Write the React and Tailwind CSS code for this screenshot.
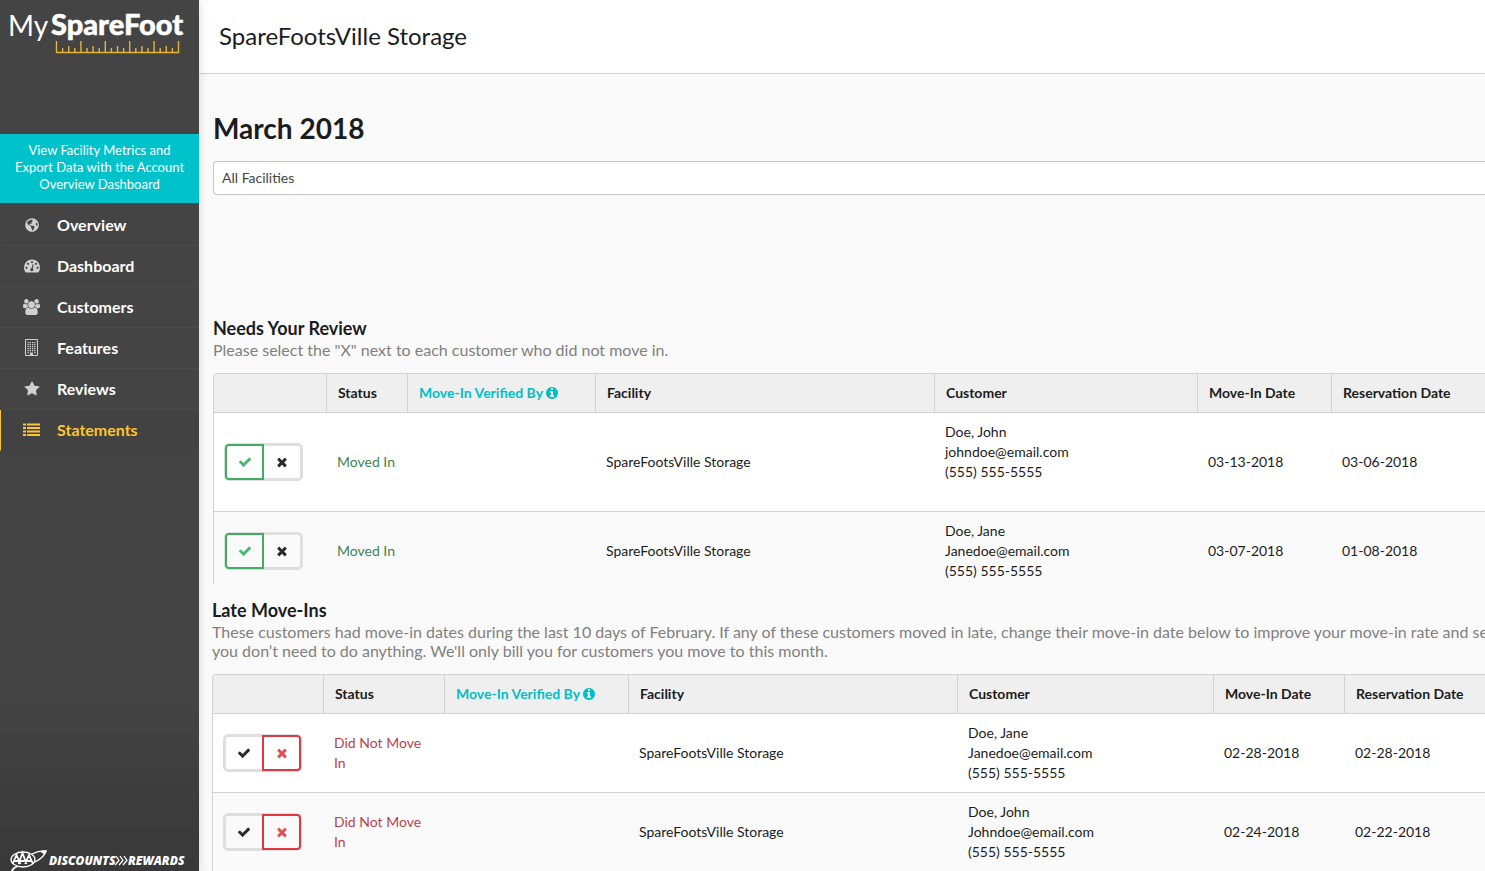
// monthly statement page: sidebar, facility filter and move-in review tables
import React, { useState } from 'react';
import { FaGlobeAmericas } from 'react-icons/fa';

const CHECK = 'M1671 566q0 40-28 68l-724 724-136 136q-28 28-68 28t-68-28l-136-136-362-362q-28-28-28-68t28-68l136-136q28-28 68-28t68 28l294 295 656-657q28-28 68-28t68 28l136 136q28 28 28 68z';
const CROSS = 'M1490 1322q0 40-28 68l-136 136q-28 28-68 28t-68-28l-294-294-294 294q-28 28-68 28t-68-28l-136-136q-28-28-28-68t28-68l294-294-294-294q-28-28-28-68t28-68l136-136q28-28 68-28t68 28l294 294 294-294q28-28 68-28t68 28l136 136q28 28 28 68t-28 68l-294 294 294 294q28 28 28 68z';
const INFO = 'M1152 1376v-160q0-14-9-23t-23-9h-96v-512q0-14-9-23t-23-9h-320q-14 0-23 9t-9 23v160q0 14 9 23t23 9h96v320h-96q-14 0-23 9t-9 23v160q0 14 9 23t23 9h448q14 0 23-9t9-23zm-128-896v-160q0-14-9-23t-23-9h-192q-14 0-23 9t-9 23v160q0 14 9 23t23 9h192q14 0 23-9t9-23zm640 416q0 209-103 385.5t-279.5 279.5-385.5 103-385.5-103-279.5-279.5-103-385.5 103-385.5 279.5-279.5 385.5-103 385.5 103 279.5 279.5 103 385.5z';
const STAR = 'M1728 647q0 22-26 48l-363 354 86 500q1 7 1 20 0 21-10.5 35.5t-30.5 14.5q-19 0-40-12l-449-236-449 236q-22 12-40 12-21 0-31.5-14.5t-10.5-35.5q0-6 2-20l86-500-364-354q-25-27-25-48 0-37 56-46l502-73 225-455q19-41 49-41t49 41l225 455 502 73q56 9 56 46z';
const USERS = 'M529 896q-162 5-265 128h-134q-82 0-138-40.5t-56-118.5q0-353 124-353 6 0 43.5 21t97.5 42.5 119 21.5q67 0 133-23-5 37-5 66 0 139 81 256zm1071 637q0 120-73 189.5t-194 69.5h-874q-121 0-194-69.5t-73-189.5q0-53 3.5-103.5t14-109 26.5-108.5 43-97.5 62-81 85.5-53.5 111.5-20q10 0 43 21.5t73 48 107 48 135 21.5 135-21.5 107-48 73-48 43-21.5q61 0 111.5 20t85.5 53.5 62 81 43 97.5 26.5 108.5 14 109 3.5 103.5zm-1024-1277q0 106-75 181t-181 75-181-75-75-181 75-181 181-75 181 75 75 181zm704 384q0 159-112.5 271.5t-271.5 112.5-271.5-112.5-112.5-271.5 112.5-271.5 271.5-112.5 271.5 112.5 112.5 271.5zm576 225q0 78-56 118.5t-138 40.5h-134q-103-123-265-128 81-117 81-256 0-29-5-66 66 23 133 23 59 0 119-21.5t97.5-42.5 43.5-21q124 0 124 353zm-128-609q0 106-75 181t-181 75-181-75-75-181 75-181 181-75 181 75 75 181z';

const Glyph = ({ d, className, viewBox = '0 0 1792 1792' }) => (
    <svg viewBox={viewBox} className={className} fill="currentColor" aria-hidden="true">
        <path d={d} />
    </svg>
);

const GaugeIcon = () => (
    <svg viewBox="0 0 16 14" className="w-4 h-[14px]" aria-hidden="true">
        <path d="M8 .5a8 8 0 0 0-8 8c0 1.7.5 3.3 1.3 4.6.2.3.4.4.7.4h12c.3 0 .5-.1.7-.4A8.4 8.4 0 0 0 16 8.5a8 8 0 0 0-8-8z" fill="currentColor" />
        <g fill="#444">
            <circle cx="2.5" cy="8.8" r="1.1" />
            <circle cx="4.1" cy="4.8" r="1.1" />
            <circle cx="8" cy="3.1" r="1.1" />
            <circle cx="11.9" cy="4.8" r="1.1" />
            <circle cx="13.5" cy="8.8" r="1.1" />
            <circle cx="7.8" cy="10.6" r="1.6" />
        </g>
        <path d="M7.9 10.4L9 5.9" stroke="#444" strokeWidth="1.1" strokeLinecap="round" />
    </svg>
);

const BuildingIcon = () => (
    <svg viewBox="0 0 13 17" className="w-[13px] h-[17px]" aria-hidden="true">
        <path d="M.5.5h12v16h-12z" fill="none" stroke="currentColor" />
        <g fill="currentColor">
            {[3, 5, 7, 9, 11].map((y) => (
                <path key={y} d={`M2.5 ${y}h1.3v1.2h-1.3zM4.7 ${y}h1.3v1.2h-1.3zM7 ${y}h1.3v1.2h-1.3zM9.2 ${y}h1.3v1.2h-1.3z`} />
            ))}
            <path d="M2.5 13h1.3v1.2H2.5zM9.2 13h1.3v1.2H9.2zM5 13.5h3V16H5z" />
        </g>
    </svg>
);

const ListIcon = () => (
    <svg viewBox="0 0 17 14" className="w-[17px] h-[14px]" fill="currentColor" aria-hidden="true">
        <path d="M0 .5h3v2H0zM4 .5h13v2H4zM0 4h3v2H0zM4 4h13v2H4zM0 7.5h3v2H0zM4 7.5h13v2H4zM0 11h3v2H0zM4 11h13v2H4z" />
    </svg>
);

const navItems = [
    { name: 'Overview', icon: <FaGlobeAmericas className="size-[14px]" /> },
    { name: 'Dashboard', icon: <GaugeIcon /> },
    { name: 'Customers', icon: <Glyph d={USERS} viewBox="-64 0 1920 1792" className="w-[17px] h-4" /> },
    { name: 'Features', icon: <BuildingIcon /> },
    { name: 'Reviews', icon: <Glyph d={STAR} className="size-4" /> },
    { name: 'Statements', icon: <ListIcon />, active: true },
];

const Logo = () => (
    <a href="#home" aria-label="My SpareFoot" className="block h-[134px]">
        <svg viewBox="-10 -8 199 64" className="w-[199px] h-16" aria-hidden="true">
            <text x="-2" y="28" fill="#fff" fontFamily="Lato, sans-serif" fontWeight="400" fontSize="28">My</text>
            <text x="41" y="27" fill="#fff" stroke="#fff" strokeWidth=".5" fontFamily="Lato, sans-serif" fontWeight="900" fontSize="29">SpareFoot</text>
            <path
                d="M46.5 33v11.5h122V33M52.600 40v4M58.700 38v6M64.800 40v4M70.900 33v11M77 40v4M83.100 38v6M89.200 40v4M95.300 33v11M101.400 40v4M107.500 38v6M113.600 40v4M119.700 33v11M125.800 40v4M131.900 38v6M138 40v4M144.100 33v11M150.200 40v4M156.300 38v6M162.400 40v4"
                fill="none"
                stroke="#e5b53a"
                strokeWidth="1.4"
            />
        </svg>
    </a>
);

const RewardsLogo = () => (
    <a href="#rewards" aria-label="AAA Discounts and Rewards" className="mt-auto block pl-[10px]">
        <svg viewBox="0 0 180 22" className="w-[180px] h-[22px]" aria-hidden="true">
            <ellipse cx="13" cy="10.5" rx="12" ry="7.5" fill="none" stroke="#fff" strokeWidth="1.3" />
            <path d="M2.5 15l4-9 4 9M8.500 15l4-11 4 11M15 15l4-9 4 9M4 12h5M10 12h5M16.500 12h5" fill="none" stroke="#fff" strokeWidth="1.8" />
            <path d="M22 5C27 2.500 32 1.500 36 2c-1 4-5 8-11 11" fill="none" stroke="#fff" strokeWidth="1.3" />
            <path d="M29 2.500c3-1 5-1.200 8-1-1 2-2 4-4 6 1-2 1-3.500-4-5zM1 22c1-3 3-4.500 6-5l1 1c-3 1-4 2-5 4z" fill="#fff" />
            <g fill="#fff" fontFamily="'Open Sans', sans-serif" fontWeight="800" fontStyle="italic" fontSize="12">
                <text x="39" y="16">DISCOUNTS</text>
                <text x="118" y="16">REWARDS</text>
            </g>
            <path d="M106 7l3 4.500-4 4.500M110 7l3 4.500-4 4.500M114 7l3 4.500-4 4.500" fill="none" stroke="#fff" strokeWidth="1.3" />
        </svg>
    </a>
);

const Sidebar = () => (
    <aside className="w-[199px] shrink-0 flex flex-col bg-linear-to-b from-[#444] from-80% to-[#383838] text-white shadow-[0_0_10px_rgba(0,0,0,0.15)] z-10">
        <Logo />
        <a href="#metrics" className="block bg-[#00c2ca] px-3 pt-2 pb-[10px] text-center text-[13px] leading-[17px]">
            View Facility Metrics and<br />Export Data with the Account<br />Overview Dashboard
        </a>
        <nav className="pt-[2px]">
            {navItems.map(({ name, icon, active }) => (
                <a
                    key={name}
                    href={`#${name.toLowerCase()}`}
                    className={`flex items-center h-[41px] pb-px text-base font-bold border-l border-b ${active ? 'border-l-[#fdc52f] border-b-transparent bg-[#424242] text-[#fdc52f]' : 'border-l-transparent border-b-[#4b4b4b]'}`}
                >
                    <span className={`w-[61px] shrink-0 flex justify-center ${active ? '' : 'text-[#d0d0d0]'}`}>{icon}</span>
                    <span className="-ml-[5px]">{name}</span>
                </a>
            ))}
        </nav>
        <RewardsLogo />
    </aside>
);

const MoveInToggle = ({ initial, customer }) => {
    const [movedIn, setMovedIn] = useState(initial);

    return (
        <div role="group" aria-label={`Move-in status for ${customer}`} className="flex w-[79px] h-[38px] rounded-[5px] border border-[#dedede]">
            <button
                type="button"
                aria-label="Moved in"
                aria-pressed={movedIn}
                onClick={() => setMovedIn(true)}
                className={`flex items-center justify-center rounded-l-[4px] ${movedIn ? 'w-[39px] border-2 border-[#3fae63] text-[#4db874]' : 'w-[38px] border-2 border-r-0 border-[#dedede] text-[#2b2b2b]'}`}
            >
                <Glyph d={CHECK} className="size-[14px]" />
            </button>
            <button
                type="button"
                aria-label="Did not move in"
                aria-pressed={!movedIn}
                onClick={() => setMovedIn(false)}
                className={`flex items-center justify-center rounded-r-[4px] ${movedIn ? 'w-[38px] border-2 border-l-0 border-[#dedede] text-[#2b2b2b]' : 'w-[39px] border-2 border-[#da3a42] text-[#df5055]'}`}
            >
                <Glyph d={CROSS} className="size-[14px]" />
            </button>
        </div>
    );
};

const headings = ['', 'Status', 'Move-In Verified By', 'Facility', 'Customer', 'Move-In Date', 'Reservation Date'];

const MoveInTable = ({ label, rows, columns, lastRow = '' }) => (
    <table aria-label={label} className="w-full table-fixed border-separate border-spacing-0 border-l border-t border-[#d2d2d2] rounded-tl-[4px] text-left text-sm leading-5 text-[#1b1c1d]">
        <colgroup>
            {columns.map((col, i) => <col key={i} className={col} />)}
        </colgroup>
        <thead>
            <tr className="h-[39px]">
                {headings.map((heading, i) => (
                    <th
                        key={heading}
                        className={`bg-[#efefef] border-b border-[#d2d2d2] px-[11px] font-bold whitespace-nowrap ${i < 6 ? 'border-r' : ''} ${i === 0 ? 'rounded-tl-[3px]' : ''}`}
                    >
                        {i === 2 ? (
                            <a href="#verified" className="inline-flex items-center gap-[2px] text-[#00bfc6]">
                                {heading}
                                <Glyph d={INFO} className="size-[14px]" />
                            </a>
                        ) : heading}
                    </th>
                ))}
            </tr>
        </thead>
        <tbody className={lastRow}>
            {rows.map((row) => (
                <tr key={row.email} className="odd:bg-white even:bg-[#fafafa] *:border-b *:border-[#d2d2d2] *:px-[10px] *:py-[9px]">
                    <td><MoveInToggle initial={row.movedIn} customer={row.name} /></td>
                    <td className={row.movedIn ? 'text-[#3c8455]' : 'text-[#b8434b]'}>{row.movedIn ? 'Moved In' : 'Did Not Move In'}</td>
                    <td />
                    <td>SpareFootsVille Storage</td>
                    <td>
                        <div className={row.tall ? 'pb-5' : ''}>
                            {row.name}<br />{row.email}<br />(555) 555-5555
                        </div>
                    </td>
                    <td>{row.moveIn}</td>
                    <td>{row.reserved}</td>
                </tr>
            ))}
        </tbody>
    </table>
);

const reviewRows = [
    { name: 'Doe, John', email: 'johndoe@email.com', moveIn: '03-13-2018', reserved: '03-06-2018', movedIn: true, tall: true },
    { name: 'Doe, Jane', email: 'Janedoe@email.com', moveIn: '03-07-2018', reserved: '01-08-2018', movedIn: true },
];

const lateRows = [
    { name: 'Doe, Jane', email: 'Janedoe@email.com', moveIn: '02-28-2018', reserved: '02-28-2018', movedIn: false },
    { name: 'Doe, John', email: 'Johndoe@email.com', moveIn: '02-24-2018', reserved: '02-22-2018', movedIn: false },
];

const App = () => (
    <div className="flex h-screen overflow-hidden bg-[#fafafa] font-[Lato,sans-serif] text-[#1b1c1d]">
        <Sidebar />
        <main className="flex-1 min-w-0 overflow-hidden">
            <header className="h-[74px] flex items-center bg-white border-b border-[#d2d2d2] pl-5 pb-[2px]">
                <p className="text-2xl">SpareFootsVille Storage</p>
            </header>

            <div className="pl-[14px] pt-9">
                <h1 className="text-[28px] leading-9 font-bold">March 2018</h1>
                <select aria-label="Facility" className="mt-[15px] block w-full h-[34px] appearance-none rounded-l-[4px] border border-r-0 border-[#c8c8c8] bg-white px-2 text-sm text-[#444]">
                    <option>All Facilities</option>
                </select>
            </div>

            <section className="pl-[14px] pt-[121px]">
                <h2 className="text-lg leading-6 font-bold">Needs Your Review</h2>
                <p className="text-base leading-[19px] text-[#808080]">Please select the "X" next to each customer who did not move in.</p>
                <div className="mt-[14px]">
                    <MoveInTable
                        label="Needs Your Review"
                        rows={reviewRows}
                        columns={['w-[113px]', 'w-[81px]', 'w-[188px]', 'w-[339px]', 'w-[263px]', 'w-[134px]', '']}
                        lastRow="[&>tr:last-child>td]:border-b-0 [&>tr:last-child>td]:pb-[3px]"
                    />
                </div>
            </section>

            <section className="pl-[13px] pt-[14px]">
                <h2 className="text-lg leading-6 font-bold">Late Move-Ins</h2>
                <p className="text-base leading-[19px] whitespace-nowrap text-[#808080]">
                    These customers had move-in dates during the last 10 days of February. If any of these customers moved in late, change their move-in date below to improve your move-in rate and searc<br />
                    you don’t need to do anything. We'll only bill you for customers you move to this month.
                </p>
                <div className="mt-[14px]">
                    <MoveInTable
                        label="Late Move-Ins"
                        rows={lateRows}
                        columns={['w-[111px]', 'w-[121px]', 'w-[184px]', 'w-[329px]', 'w-[256px]', 'w-[131px]', '']}
                    />
                </div>
            </section>
        </main>
    </div>
);

export default App;
